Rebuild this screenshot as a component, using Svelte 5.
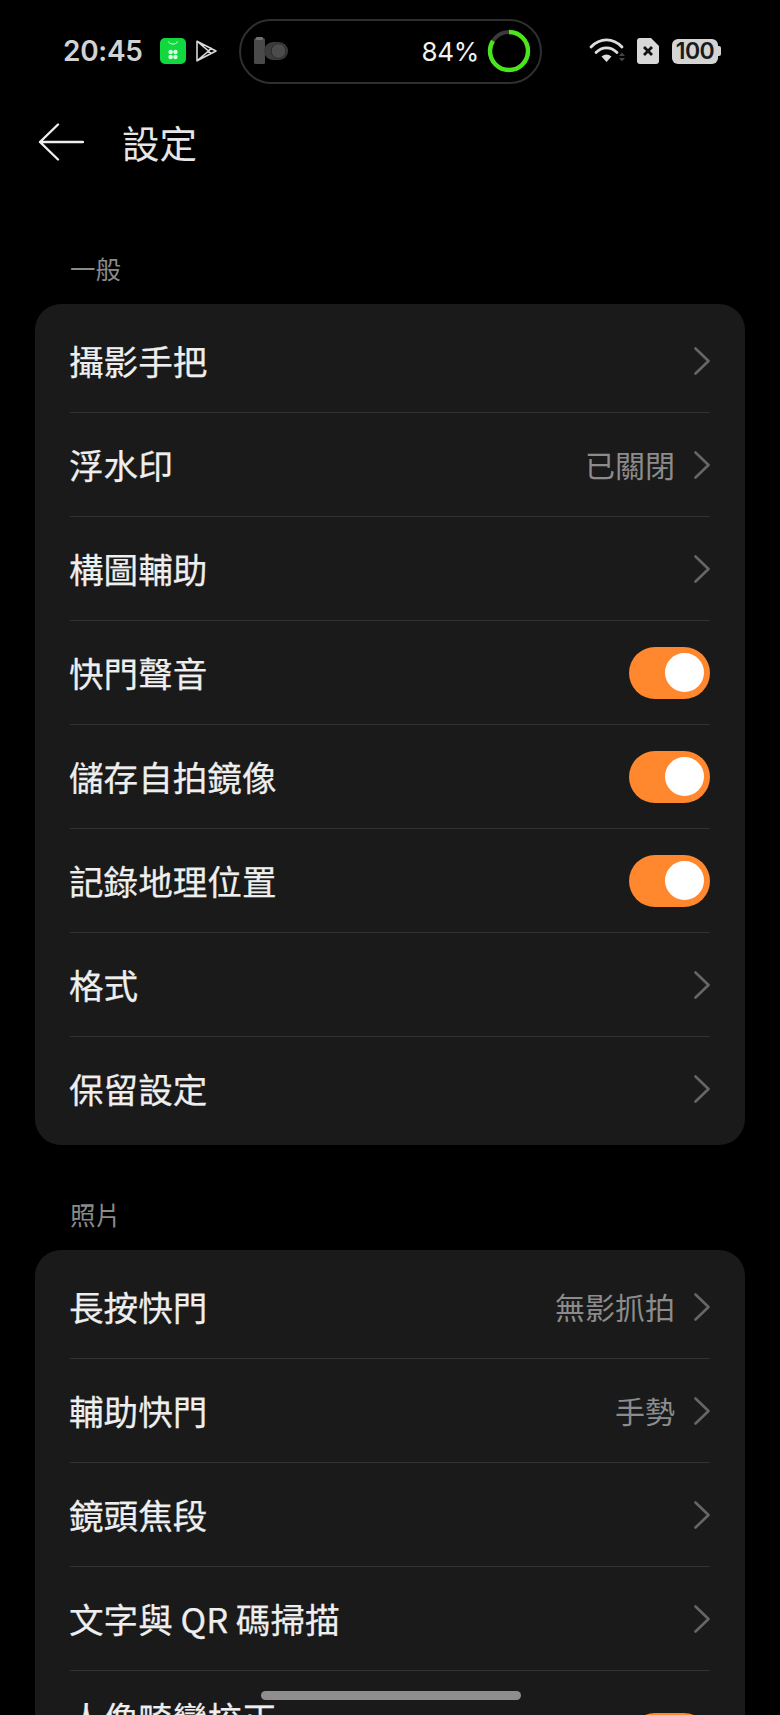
<script>
  const general = [
    { label: "攝影手把" },
    { label: "浮水印", value: "已關閉" },
    { label: "構圖輔助" },
    { label: "快門聲音", toggle: true },
    { label: "儲存自拍鏡像", toggle: true },
    { label: "記錄地理位置", toggle: true },
    { label: "格式" },
    { label: "保留設定" },
  ];

  const photo = [
    { label: "長按快門", value: "無影抓拍" },
    { label: "輔助快門", value: "手勢" },
    { label: "鏡頭焦段" },
    { label: "文字與 QR 碼掃描" },
    { label: "人像畸變校正", toggle: true, tall: true },
  ];

  const sections = [
    { title: "一般", rows: general },
    { title: "照片", rows: photo },
  ];
</script>

<div class="phone">
  <header class="status">
    <span class="time">20:45</span>
    <svg class="app-green" viewBox="0 0 26 26" width="26" height="26">
      <rect width="26" height="26" rx="5" fill="#12d83f" />
      <path d="M8.5 3.5c1 3.4 8 3.4 9 0" fill="none" stroke="#d8ffe0" stroke-width="1" />
      <circle cx="10.6" cy="14" r="2.2" fill="#d8ffe0" />
      <circle cx="15.4" cy="14" r="2.2" fill="#d8ffe0" />
      <circle cx="10.6" cy="19" r="2.2" fill="#d8ffe0" />
      <circle cx="15.4" cy="19" r="2.2" fill="#d8ffe0" />
    </svg>
    <svg class="app-play" viewBox="0 0 23 24" width="23" height="24">
      <path d="M2 2.2 21 12 2 21.8Z M2 2.2 13.5 12 2 21.8 M13.5 12 16.5 8.6 M13.5 12 16.5 15.4" fill="none" stroke="#d8d8d8" stroke-width="1.6" stroke-linejoin="round" />
    </svg>

    <div class="island">
      <svg class="grip" viewBox="0 0 36 28" width="36" height="28">
        <rect x="1" y="1" width="11" height="26" rx="1.5" fill="#4a4a4a" />
        <rect x="3" y="0" width="7" height="3" rx="1" fill="#77706a" />
        <rect x="11" y="5" width="24" height="18" rx="9" fill="#3c3c3c" />
        <circle cx="25.5" cy="14" r="7.4" fill="#4c4c4c" stroke="#2a2a2a" stroke-width="1" />
      </svg>
      <span class="percent">84%</span>
      <svg class="ring" viewBox="0 0 44 44" width="44" height="44">
        <circle cx="22" cy="22" r="19" fill="none" stroke="#3a3a3a" stroke-width="4" />
        <circle cx="22" cy="22" r="19" fill="none" stroke="#4be51c" stroke-width="4.4" pathLength="100" stroke-dasharray="84 16" transform="rotate(-90 22 22)" />
      </svg>
    </div>

    <svg class="wifi" viewBox="0 0 38 28" width="38" height="28">
      <path d="M2 10C11 0.5 24 0.5 33 10" fill="none" stroke="#ddd" stroke-width="2.8" stroke-linecap="round" />
      <path d="M7 15.5C13 9.2 22 9.2 28 15.5" fill="none" stroke="#ddd" stroke-width="2.8" stroke-linecap="round" />
      <path d="M12.5 19.6C15.8 16.8 19.2 16.8 22.5 19.6L17.5 25Z" fill="#ddd" />
      <path d="M33 15.5l3 3.5h-6Z M30 21h6l-3 3.5Z" fill="#444" />
    </svg>
    <svg class="sim" viewBox="0 0 22 26" width="22" height="26">
      <path d="M3 0H14L22 8V23A3 3 0 0 1 19 26H3A3 3 0 0 1 0 23V3A3 3 0 0 1 3 0Z" fill="#d8d8d8" />
      <path d="M7 9 15 17M15 9 7 17" stroke="#111" stroke-width="2.8" />
    </svg>
    <div class="battery">
      <span class="level">100</span>
      <span class="nub"></span>
    </div>
  </header>

  <div class="topbar">
    <svg viewBox="0 0 46 38" width="46" height="38">
      <path d="M45 19H2M20 1.5 2 19l18 17.5" fill="none" stroke="#eee" stroke-width="2.4" stroke-linecap="round" stroke-linejoin="round" />
    </svg>
    <h1>設定</h1>
  </div>

  {#each sections as section}
    <h2>{section.title}</h2>
    <section class="card">
      {#each section.rows as row}
        <div class="row" class:tall={row.tall}>
          <span class="label">{row.label}</span>
          {#if row.value}
            <span class="value">{row.value}</span>
          {/if}
          {#if row.toggle}
            <span class="toggle"><span class="knob"></span></span>
          {:else}
            <svg class="chevron" viewBox="0 0 16 28" width="16" height="28">
              <path d="M1.5 1.5 14.5 14 1.5 26.5" fill="none" stroke="#666" stroke-width="2.6" stroke-linecap="round" stroke-linejoin="round" />
            </svg>
          {/if}
        </div>
      {/each}
    </section>
  {/each}

  <div class="home"></div>
</div>

<style>
  :global(body) {
    background: #000;
  }

  .phone {
    position: relative;
    width: 780px;
    height: 1715px;
    overflow: hidden;
    background: #000;
    color: #ececec;
    font-family: "Noto Sans CJK TC", "Noto Sans", sans-serif;
  }

  /* Status bar */
  .status {
    display: flex;
    align-items: center;
    height: 64px;
    padding: 19px 0 0 63px;
  }

  .time {
    width: 85px;
    font-family: Inter, sans-serif;
    font-size: 28px;
    font-weight: 600;
    color: #d2d2d2;
    letter-spacing: -0.3px;
  }

  .app-green { margin-left: 12px; }
  .app-play { margin-left: 9px; }

  .island {
    display: flex;
    align-items: center;
    box-sizing: border-box;
    width: 303px;
    height: 65px;
    margin-left: 21px;
    padding: 0 9px 0 12px;
    border: 2px solid #2f2f2f;
    border-radius: 33px;
  }

  .percent {
    margin-left: auto;
    margin-right: 8px;
    font-family: Inter, sans-serif;
    font-size: 26px;
    letter-spacing: -0.3px;
    color: #f2f2f2;
  }

  .wifi { margin-left: 47px; }
  .sim { margin-left: 10px; }

  .battery {
    display: flex;
    align-items: center;
    margin-left: 13px;
  }

  .level {
    width: 46px;
    height: 25px;
    border-radius: 6px;
    background: #d4d4d4;
    color: #1a1a1a;
    font-family: Inter, sans-serif;
    font-size: 23px;
    font-weight: 600;
    line-height: 25px;
    text-align: center;
    letter-spacing: -0.5px;
  }

  .nub {
    width: 3px;
    height: 10px;
    border-radius: 0 2px 2px 0;
    background: #d4d4d4;
  }

  /* Title bar */
  .topbar {
    display: flex;
    align-items: center;
    height: 48px;
    margin-top: 35px;
    padding-left: 38px;
  }

  h1 {
    margin: 0 0 0 38px;
    font-size: 37.5px;
    font-weight: 400;
    line-height: 48px;
    color: #e6e6e6;
  }

  h2 {
    margin: 0;
    padding: 0 0 0 70px;
    height: 38px;
    font-size: 25.5px;
    font-weight: 400;
    line-height: 38px;
    color: #8a8a8a;
  }

  .topbar + h2 {
    margin-top: 83px;
    margin-bottom: 17px;
  }

  .card + h2 {
    margin-top: 50px;
    margin-bottom: 17px;
  }

  .card {
    margin: 0 35px;
    padding: 5px 35px 4px;
    border-radius: 26px;
    background: #1a1a1a;
  }

  .row {
    display: flex;
    align-items: center;
    box-sizing: border-box;
    height: 104px;
    border-bottom: 1px solid #333;
  }

  .row:last-child {
    border-bottom: 0;
  }

  .row.tall {
    height: 136px;
  }

  .row.tall .label {
    align-self: flex-start;
    margin-top: 22px;
  }

  .label {
    margin-left: -1px;
    padding-bottom: 2px;
    font-size: 34.6px;
    font-weight: 400;
    line-height: 48px;
    color: #eee;
    -webkit-text-stroke: 0.25px #eee;
  }

  .value {
    margin-left: auto;
    padding-bottom: 2px;
    font-size: 30px;
    color: #8c8c8c;
  }

  .chevron {
    margin-left: auto;
    margin-right: 0;
  }

  .value + .chevron {
    margin-left: 19px;
  }

  .toggle {
    display: flex;
    align-items: center;
    justify-content: flex-end;
    box-sizing: border-box;
    width: 81px;
    height: 52px;
    margin-left: auto;
    padding-right: 6px;
    border-radius: 26px;
    background: #ff872d;
  }

  .knob {
    width: 39px;
    height: 39px;
    border-radius: 50%;
    background: #fff;
  }

  /* Gesture bar sits over the list */
  .home {
    position: absolute;
    left: 261px;
    top: 1691px;
    width: 260px;
    height: 9px;
    border-radius: 5px;
    background: #8e8e8e;
  }
</style>
